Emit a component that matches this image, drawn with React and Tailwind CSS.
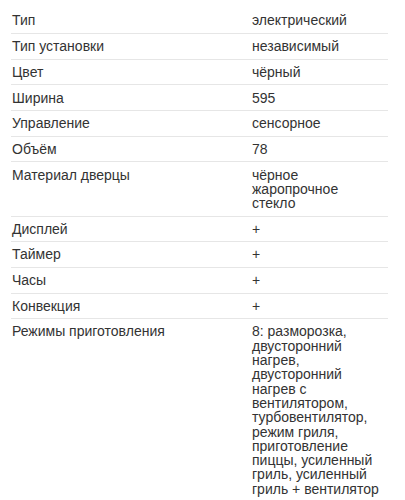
const specs = [
  ["Тип", "электрический"],
  ["Тип установки", "независимый"],
  ["Цвет", "чёрный"],
  ["Ширина", "595"],
  ["Управление", "сенсорное"],
  ["Объём", "78"],
  ["Материал дверцы", "чёрное жаропрочное стекло"],
  ["Дисплей", "+"],
  ["Таймер", "+"],
  ["Часы", "+"],
  ["Конвекция", "+"],
  [
    "Режимы приготовления",
    "8: разморозка, двусторонний нагрев, двусторонний нагрев с вентилятором, турбовентилятор, режим гриля, приготовление пиццы, усиленный гриль, усиленный гриль + вентилятор",
  ],
];

export default function App() {
  return (
    <div
      className="bg-white w-[405px] h-[500px] overflow-hidden pt-[8.3px] px-[11px] text-[14px] leading-[14.3px] text-[#333]"
      style={{ fontFamily: '"Liberation Sans", Arial, sans-serif' }}
    >
      {specs.map(([name, value], i) => (
        <div
          key={i}
          className="flex border-b border-[#e6e6e6] py-[5.2px] w-[377px]"
        >
          <div className="w-[241px] pl-[1px] shrink-0">{name}</div>
          <div className="w-[132px]">{value}</div>
        </div>
      ))}
    </div>
  );
}
